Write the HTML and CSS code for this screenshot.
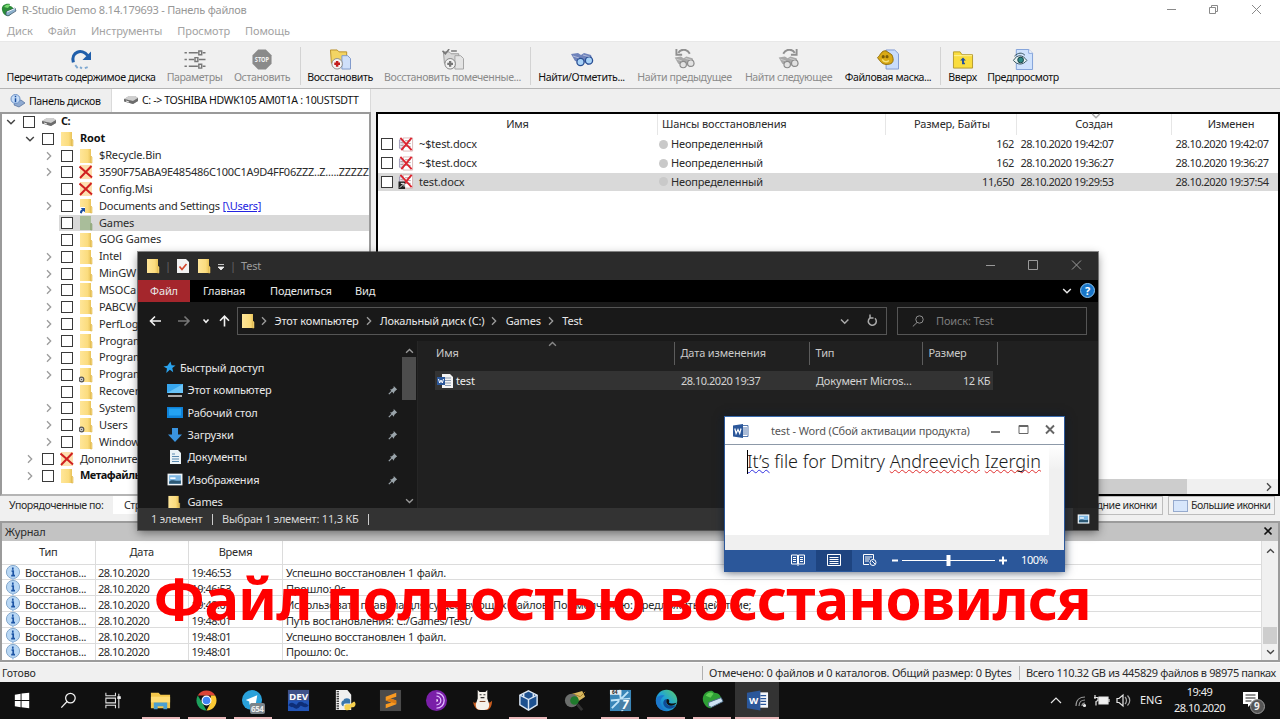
FILE: index.html
```html
<!DOCTYPE html>
<html lang="ru">
<head>
<meta charset="utf-8">
<title>R-Studio Demo 8.14.179693 - Панель файлов</title>
<link rel="stylesheet" href="styles.css">
</head>
<body>
<svg class="defs" width="0" height="0">
  <defs>
    <linearGradient id="g-folder" x1="0" y1="0" x2="1" y2="0"><stop offset="0" stop-color="#ffe699"/><stop offset=".7" stop-color="#fbdc7e"/><stop offset="1" stop-color="#e9c35a"/></linearGradient>
    <linearGradient id="g-edge" x1="0" y1="1" x2="1" y2="0"><stop offset="0" stop-color="#1565c0"/><stop offset=".5" stop-color="#1fa3d6"/><stop offset="1" stop-color="#5cd06a"/></linearGradient>
  </defs>
  <symbol id="folder" viewBox="0 0 14 16"><path d="M1 1h11v14H1z" fill="url(#g-folder)"/><path d="M12 8l1 1v6h-1.500v-6z" fill="#f6d77c" stroke="#dcb34a" stroke-width=".6"/></symbol>
  <symbol id="folder-green" viewBox="0 0 14 16"><path d="M1 1h11v14H1z" fill="#a9bd9a"/><path d="M12 8l1 1v6h-1.500v-6z" fill="#9db387" stroke="#8aa375" stroke-width=".6"/></symbol>
  <symbol id="folder-link" viewBox="0 0 14 16"><use href="#folder"/><path d="M0 9h6v7H0z" fill="#fff"/><path d="M1 15c0-2 .5-3 2-3.500L1.800 10H6v4.200l-1.300-1.300C3.500 13.200 3 14 3 15.500z" fill="#1c4fa0"/></symbol>
  <symbol id="folder-gear" viewBox="0 0 14 16"><use href="#folder"/><circle cx="2.500" cy="12.500" r="2.300" fill="#ddd" stroke="#555" stroke-width="1.200"/><circle cx="2.500" cy="12.500" r=".8" fill="#555"/></symbol>
  <symbol id="folder-x" viewBox="0 0 14 16"><path d="M1 1h12v14H1z" fill="#fde0b0"/><path d="M.5 2.500l12.500 11M12.500 2L1 14" stroke="#d02020" stroke-width="2"/></symbol>
  <symbol id="file-x" viewBox="0 0 16 16"><path d="M1 3h7v9H1z" fill="#e8e2ee" stroke="#8c84a8" stroke-width=".8"/><path d="M5 1h10v14H5z" fill="#fff" stroke="#c99" stroke-width=".7"/><path d="M7 4h6M7 7h6M7 10h6M2 6h3M2 9h3" stroke="#a99"/><path d="M2 1l12 13M14 1L3 14" stroke="#dc2430" stroke-width="2"/></symbol>
  <symbol id="drive" viewBox="0 0 16 10"><path d="M1 4l5-3h6l3 2v3l-5 3-9-3z" fill="#a8a8a8"/><path d="M1 4l5-3h6l3 2-5 3z" fill="#cfcfcf"/><path d="M10 6l5-3v3l-5 3zM1 4l9 2v3L1 6.500z" fill="#6c6c6c"/><path d="M3 6l3 1" stroke="#e8e8e8"/></symbol>
  <symbol id="rstudio" viewBox="0 0 16 14"><path d="M1 7C0 2 5 0 9 1l-1 2c3 0 5 2 5 5l-5 5C4 13 2 11 1 7z" fill="#2c8a3a"/><path d="M3 4c2-3 5-3 6-2L7 5z" fill="#78d870"/><path d="M5 9l9-4 1 3-8 5-2-1z" fill="#8db0cc" stroke="#3c5266" stroke-width=".7"/><path d="M6 9l8-3.500" stroke="#eef6ff"/></symbol>
  <symbol id="dn" viewBox="0 0 10 6"><path d="M1.200 1L5 4.700 8.800 1" fill="none" stroke="currentColor" stroke-width="1.500"/></symbol>
  <symbol id="rt" viewBox="0 0 6 10"><path d="M1 1.200L4.700 5 1 8.800" fill="none" stroke="currentColor" stroke-width="1.300"/></symbol>
  <symbol id="info" viewBox="0 0 16 16"><circle cx="8" cy="7" r="6.600" fill="#b9d8f5" stroke="#86a9cc"/><path d="M6 13l2 3 1.500-3z" fill="#9dc0e4"/><path d="M7.800 2.500v2.200M6.600 6.200h1.600v4.500M6.200 10.700h3.800" stroke="#1d55a5" stroke-width="1.700" fill="none"/></symbol>
  <symbol id="pin" viewBox="0 0 10 10"><path d="M5.500.8l3.700 3.700-1 .4-2 2-.3 1.900L2 4.500l1.900-.3 2-2z" fill="#9aa4aa"/><path d="M3.800 6.200L.8 9.200" stroke="#9aa4aa" stroke-width="1.200"/></symbol>
  <symbol id="pic" viewBox="0 0 15 12"><path d="M.5.5h14v11H.5z" fill="#eef4f8"/><path d="M2 2h11v8H2z" fill="#7eb8e4"/><path d="M2 8c3-3 5 0 11-1v3H2z" fill="#2c5874"/><path d="M3 4h5v1.500H3z" fill="#fff"/></symbol>
  <symbol id="binoc" viewBox="0 0 24 16"><path d="M1 3l7-1 3 2 3-2 7 2 2 6-5 4-4-3-2-3-3 3-4-1z" fill="currentColor"/><circle cx="10.500" cy="11" r="3.600" fill="var(--lens)" stroke="var(--rim)" stroke-width="1.300"/><circle cx="19" cy="9.500" r="3.600" fill="var(--lens)" stroke="var(--rim)" stroke-width="1.300"/><path d="M3 5l6 2M13 4l7 2" stroke="#fff" stroke-opacity=".45"/></symbol>
</svg>

<div class="app">
  <header class="titlebar">
    <svg class="i-app"><use href="#rstudio"/></svg>
    <span class="title">R-Studio Demo 8.14.179693 - Панель файлов</span>
    <svg class="winctl" viewBox="0 0 110 20" fill="none" stroke="#8a8a8a"><path d="M7 9.500h9M49.500 7.500h6v6h-6zM51.500 7.500v-2h6v6h-2M92 5l9 9M101 5l-9 9"/></svg>
  </header>
  <nav class="menubar"><span>Диск</span><span>Файл</span><span>Инструменты</span><span>Просмотр</span><span>Помощь</span></nav>

  <div class="toolbar">
    <div class="tool t1"><svg viewBox="0 0 24 22"><path d="M4 14C1 3 13-1 19 7" fill="none" stroke="#1f5eaa" stroke-width="3.200"/><path d="M22.500 2.500v9h-9z" fill="#1f5eaa"/><path d="M6 17l2.500 3M11 19l2 1.500M16 20l3-1" stroke="#7fa8d0" stroke-width="2"/></svg><span>Перечитать содержимое диска</span></div>
    <div class="tool t2 off"><svg viewBox="0 0 24 22" stroke="#777" stroke-width="1.500" fill="none"><path d="M1 4h2.500M5.500 4H15M20 4h3M1 11h2.500M5.500 11H11M16 11h7M1 18h2.500M5.500 18H15M20 18h3"/><path d="M16 2h3v4h-3zM12 9h3v4h-3zM16 16h3v4h-3z"/></svg><span>Параметры</span></div>
    <div class="tool t3 off"><svg viewBox="0 0 24 22"><path d="M8 .500h8l6 6v9l-6 6H8l-6-6v-9z" fill="#8a8a8a"/><text x="12" y="14" text-anchor="middle" font-size="7" font-weight="bold" textLength="15" lengthAdjust="spacingAndGlyphs" fill="#f2f2f2">STOP</text></svg><span>Остановить</span></div>
    <i class="vsep"></i>
    <div class="tool t4"><svg viewBox="0 0 24 22"><path d="M2 1h7l2 2h8v12H3z" fill="#f3d463" stroke="#b9902a"/><path d="M14 7h6l3 3v11h-9z" fill="#cfe0fa" stroke="#7d97c9"/><circle cx="9" cy="15.500" r="5.500" fill="#f6f6f6" stroke="#8a8a8a"/><path d="M9 12.500v6M6 15.500h6" stroke="#c41e1e" stroke-width="2.600"/></svg><span>Восстановить</span></div>
    <div class="tool t5 off"><svg viewBox="0 0 24 22"><path d="M2 3h6l2 2h8v10H3z" fill="#d8d8d8" stroke="#999"/><path d="M14 7h6l3 3v11h-9z" fill="#e4e4e4" stroke="#a2a2a2"/><circle cx="9" cy="15.500" r="5.500" fill="#f2f2f2" stroke="#808080"/><path d="M9 12.500v6M6 15.500h6" stroke="#777" stroke-width="2.400"/><path d="M1 2l3 3 4-5M10 2h6" fill="none" stroke="#777" stroke-width="1.600"/></svg><span>Восстановить помеченные...</span></div>
    <i class="vsep"></i>
    <div class="tool t6 blue"><svg><use href="#binoc" y="2" height="16" width="24"/></svg><span>Найти/Отметить...</span></div>
    <div class="tool t7 off grey"><svg viewBox="0 0 24 22"><use href="#binoc" y="6" height="15" width="23"/><path d="M17 5C14-1 7 0 5 4M3 0v6h6" fill="none" stroke="#909090" stroke-width="2"/></svg><span>Найти предыдущее</span></div>
    <div class="tool t8 off grey"><svg viewBox="0 0 24 22"><use href="#binoc" y="6" height="15" width="23"/><path d="M6 5C9-1 16 0 18 4M20 0v6h-6" fill="none" stroke="#909090" stroke-width="2"/></svg><span>Найти следующее</span></div>
    <div class="tool t9"><svg viewBox="0 0 24 22"><path d="M10 1h9l4 4v16H10z" fill="#c9dcfb" stroke="#8099d0"/><path d="M1 9c3-2 4-8 9-7l6 4c3 6 1 10-4 10-6 1-8-3-11-7z" fill="#d9a916" stroke="#8f6b07"/><circle cx="7" cy="8" r="1.600" fill="#7a5c08"/><circle cx="11" cy="8" r="1.600" fill="#7a5c08"/><path d="M6 11c2 3 5 3 7 1" fill="none" stroke="#f6e27a" stroke-width="1.500"/></svg><span>Файловая маска...</span></div>
    <i class="vsep"></i>
    <div class="tool t10"><svg viewBox="0 0 24 22"><path d="M2 3h7l2 3h11v14H2z" fill="#fadd3e" stroke="#b59a2e"/><path d="M2.500 7h19" stroke="#fff3a0"/><path d="M12 9l-3 3h2v4h3v-1.500h-1V12h2z" fill="#224f9e"/></svg><span>Вверх</span></div>
    <div class="tool t11"><svg viewBox="0 0 24 22"><path d="M5 .500h13l4 4v17H5z" fill="#cfe2fd" stroke="#7fa0d8"/><path d="M18 .500v4h4" fill="#fff" stroke="#7fa0d8"/><path d="M2 12c4-7 10-6 14 0-4 5-10 5-14 0z" fill="#e8f4f4" stroke="#33505a"/><circle cx="9.500" cy="11.500" r="3" fill="#2d8a86" stroke="#173e46"/><path d="M3 7.500c4-4 8-4 11-1" stroke="#33505a" fill="none"/></svg><span>Предпросмотр</span></div>
  </div>

  <div class="tabs">
    <div class="tab"><svg viewBox="0 0 16 14"><path d="M5 8l6-2 4 3-6 4-5-2z" fill="#8faad0" stroke="#4c6a9a" stroke-width=".7"/><circle cx="5.500" cy="5" r="4.500" fill="#c5dcf7" stroke="#6a8fc4"/><path d="M5.500 1.800v1.400M5.500 4.200v4" stroke="#1d4fa0" stroke-width="1.500"/></svg><span>Панель дисков</span></div>
    <div class="tab active"><svg viewBox="0 0 16 10"><use href="#drive"/></svg><span>C: -&gt; TOSHIBA HDWK105 AM0T1A : 10USTSDTT</span></div>
  </div>

  <main class="panes">
    <section class="tree">
      <div class="row l0"><svg class="dn"><use href="#dn"/></svg><i class="cb"></i><svg class="ic drv"><use href="#drive"/></svg><b class="tight">C:</b></div>
      <div class="row l1"><svg class="dn"><use href="#dn"/></svg><i class="cb"></i><svg class="ic"><use href="#folder"/></svg><b>Root</b></div>
      <div class="row l2"><svg class="rt"><use href="#rt"/></svg><i class="cb"></i><svg class="ic"><use href="#folder"/></svg><span>$Recycle.Bin</span></div>
      <div class="row l2"><svg class="rt"><use href="#rt"/></svg><i class="cb"></i><svg class="ic"><use href="#folder-x"/></svg><span class="hash">3590F75ABA9E485486C100C1A9D4FF06ZZZ..Z.....ZZZZZ</span></div>
      <div class="row l2"><svg class="rt"></svg><i class="cb"></i><svg class="ic"><use href="#folder-x"/></svg><span>Config.Msi</span></div>
      <div class="row l2"><svg class="rt"><use href="#rt"/></svg><i class="cb"></i><svg class="ic"><use href="#folder-link"/></svg><span class="linked">Documents and Settings <a>[\Users]</a></span></div>
      <div class="row l2 sel"><svg class="rt"></svg><i class="cb"></i><svg class="ic"><use href="#folder-green"/></svg><span>Games</span></div>
      <div class="row l2"><svg class="rt"></svg><i class="cb"></i><svg class="ic"><use href="#folder"/></svg><span>GOG Games</span></div>
      <div class="row l2"><svg class="rt"><use href="#rt"/></svg><i class="cb"></i><svg class="ic"><use href="#folder"/></svg><span>Intel</span></div>
      <div class="row l2"><svg class="rt"><use href="#rt"/></svg><i class="cb"></i><svg class="ic"><use href="#folder"/></svg><span>MinGW</span></div>
      <div class="row l2"><svg class="rt"><use href="#rt"/></svg><i class="cb"></i><svg class="ic"><use href="#folder"/></svg><span>MSOCa</span></div>
      <div class="row l2"><svg class="rt"><use href="#rt"/></svg><i class="cb"></i><svg class="ic"><use href="#folder"/></svg><span>PABCW</span></div>
      <div class="row l2"><svg class="rt"><use href="#rt"/></svg><i class="cb"></i><svg class="ic"><use href="#folder"/></svg><span>PerfLog</span></div>
      <div class="row l2"><svg class="rt"><use href="#rt"/></svg><i class="cb"></i><svg class="ic"><use href="#folder"/></svg><span>Program</span></div>
      <div class="row l2"><svg class="rt"><use href="#rt"/></svg><i class="cb"></i><svg class="ic"><use href="#folder"/></svg><span>Program</span></div>
      <div class="row l2"><svg class="rt"><use href="#rt"/></svg><i class="cb"></i><svg class="ic"><use href="#folder-gear"/></svg><span>Program</span></div>
      <div class="row l2"><svg class="rt"></svg><i class="cb"></i><svg class="ic"><use href="#folder"/></svg><span>Recover</span></div>
      <div class="row l2"><svg class="rt"><use href="#rt"/></svg><i class="cb"></i><svg class="ic"><use href="#folder"/></svg><span>System</span></div>
      <div class="row l2"><svg class="rt"><use href="#rt"/></svg><i class="cb"></i><svg class="ic"><use href="#folder-gear"/></svg><span>Users</span></div>
      <div class="row l2"><svg class="rt"><use href="#rt"/></svg><i class="cb"></i><svg class="ic"><use href="#folder"/></svg><span>Window</span></div>
      <div class="row l1"><svg class="rt"><use href="#rt"/></svg><i class="cb"></i><svg class="ic"><use href="#folder-x"/></svg><span>Дополните</span></div>
      <div class="row l1"><svg class="rt"><use href="#rt"/></svg><i class="cb"></i><svg class="ic"><use href="#folder"/></svg><b class="tight">Метафайлы</b></div>
    </section>

    <section class="files">
      <div class="frow fhead"><span class="c-mid">Имя</span><span>Шансы восстановления</span><span class="c-size">Размер, Байты</span><span class="c-mid sorted">Создан<svg class="sort"><use href="#dn"/></svg></span><span class="c-mid last">Изменен</span></div>
      <div class="frow"><span class="fname"><i class="cb"></i><svg class="fx"><use href="#file-x"/></svg>~$test.docx</span><span><i class="dot"></i>Неопределенный</span><span class="num">162</span><span class="date">28.10.2020 19:42:07</span><span class="date">28.10.2020 19:42:07</span></div>
      <div class="frow"><span class="fname"><i class="cb"></i><svg class="fx"><use href="#file-x"/></svg>~$test.docx</span><span><i class="dot"></i>Неопределенный</span><span class="num">162</span><span class="date">28.10.2020 19:36:27</span><span class="date">28.10.2020 19:36:27</span></div>
      <div class="frow sel"><span class="fname"><i class="cb"></i><svg class="fx" viewBox="0 0 16 16"><use href="#file-x"/><path d="M0 8h7v8H0z" fill="#222"/><path d="M1.500 14.500l4-4M2.500 10h3.500v3.500" stroke="#fff" fill="none"/></svg>test.docx</span><span><i class="dot"></i>Неопределенный</span><span class="num">11,650</span><span class="date">28.10.2020 19:29:53</span><span class="date">28.10.2020 19:37:54</span></div>
      <div class="fscroll"><i></i><svg class="rt"><use href="#rt"/></svg></div>
    </section>
  </main>

  <div class="sortbar">
    <span class="lbl">Упорядоченные по:</span><span class="combo">Стр</span>
    <span class="btn b1">Средние иконки</span><span class="btn b2"><i class="bigic"></i>Большие иконки</span>
  </div>

  <section class="log">
    <div class="log-title"><span>Журнал</span><svg viewBox="0 0 10 10"><path d="M1.500 1.500l7 7M8.500 1.500l-7 7" stroke="#111" stroke-width="1.700"/></svg></div>
    <div class="log-body">
      <div class="log-table">
        <div class="lrow lhead"><span>Тип</span><span>Дата</span><span>Время</span><span></span></div>
        <div class="lrow"><span><svg><use href="#info"/></svg>Восстанов...</span><span class="date">28.10.2020</span><span class="date">19:46:53</span><span>Успешно восстановлен 1 файл.</span></div>
        <div class="lrow"><span><svg><use href="#info"/></svg>Восстанов...</span><span class="date">28.10.2020</span><span class="date">19:46:53</span><span>Прошло: 0с.</span></div>
        <div class="lrow"><span><svg><use href="#info"/></svg>Восстанов...</span><span class="date">28.10.2020</span><span class="date">19:48:01</span><span>Использовать правила для существующих файлов: По умолчанию: предложить действие;</span></div>
        <div class="lrow"><span><svg><use href="#info"/></svg>Восстанов...</span><span class="date">28.10.2020</span><span class="date">19:48:01</span><span>Путь востановления: C:/Games/Test/</span></div>
        <div class="lrow"><span><svg><use href="#info"/></svg>Восстанов...</span><span class="date">28.10.2020</span><span class="date">19:48:01</span><span>Успешно восстановлен 1 файл.</span></div>
        <div class="lrow"><span><svg><use href="#info"/></svg>Восстанов...</span><span class="date">28.10.2020</span><span class="date">19:48:01</span><span>Прошло: 0с.</span></div>
      </div>
      <div class="vscroll"><svg class="up"><use href="#dn"/></svg><i></i><svg class="down"><use href="#dn"/></svg></div>
    </div>
  </section>

  <footer class="status"><span class="s1">Готово</span><span class="s2">Отмечено: 0 файлов и 0 каталогов. Общий размер: 0 Bytes</span><span class="s3">Всего 110.32 GB из 445829 файлов в 98975 папках</span></footer>

  <div class="taskbar">
    <div class="tk"><svg viewBox="0 0 24 24" fill="#fff"><path d="M4 6l6-1v6.500H4zM11 4.800L19 4v7.500h-8zM4 12.500h6V19l-6-1zM11 12.500h8V20l-8-.900z"/></svg></div>
    <div class="tk"><svg viewBox="0 0 24 24" fill="none" stroke="#f2f2f2" stroke-width="1.300"><circle cx="14" cy="9.500" r="5"/><path d="M10.500 13L4.500 19.500"/></svg></div>
    <div class="tk"><svg viewBox="0 0 24 24" fill="none" stroke="#e6e6e6" stroke-width="1.100"><path d="M3 4v3h10V4M3 20v-3h10v3M3 9.500h10v5H3zM16.500 5v15"/><path d="M15.500 8h2.500v2h-2.500z" fill="#fff"/></svg></div>
    <div class="tk run"><svg viewBox="0 0 24 24"><path d="M2 4h8l2 2h10v14H2z" fill="#f3c64a"/><path d="M2 8h20v6H2z" fill="#ffdc74"/><path d="M5 21v-7h14v7h-4v-3H9v3z" fill="#4a9fd0"/></svg></div>
    <div class="tk run"><svg viewBox="0 0 24 24"><path d="M2.900 6.800A10.500 10.500 0 0 1 21.100 6.800H12z" fill="#db4437"/><path d="M2.900 6.800L8 15l4 7.500A10.500 10.500 0 0 1 2.900 6.800z" fill="#1da05c"/><path d="M21.100 6.800A10.500 10.500 0 0 1 12 22.500L16.500 14l0-7.200z" fill="#fbc934"/><circle cx="12" cy="12" r="5.200" fill="#fff"/><circle cx="12" cy="12" r="4" fill="#4285f4"/></svg></div>
    <div class="tk run"><svg viewBox="0 0 24 24"><circle cx="11.500" cy="11.500" r="10.500" fill="#2aa1da"/><path d="M5 11.500l12-5-2 11-4-3-2 2-.5-3.500z" fill="#fff"/></svg><em>654</em></div>
    <div class="tk"><svg viewBox="0 0 24 24"><path d="M1 1h22v22H1z" fill="#2255b8"/><path d="M1 1h22v11H1z" fill="#40528a"/><text x="12" y="11" text-anchor="middle" font-size="10" font-weight="bold" textLength="20" lengthAdjust="spacingAndGlyphs" fill="#fff">DEV</text><path d="M3 18c3-5 6 4 9-1s6 3 9-1" stroke="#0e2e78" stroke-width="4" fill="none"/></svg></div>
    <div class="tk"><svg viewBox="0 0 24 24"><path d="M3 1h12l4 5v16H3z" fill="#f0f0f0"/><path d="M5 2v20" stroke="#444" stroke-width="2.500" stroke-dasharray="1.500 1"/><path d="M11 12c0-3 7-3 7 0v3h-5c-2 0-2 2-2 3-3 0-3-6 0-6z" fill="#3a76ab"/><path d="M22 13c3 2 1 6-1 6h-2c0 4-7 4-7 1v-3c2-2 6 0 7-2z" fill="#f5d04e"/></svg></div>
    <div class="tk"><svg viewBox="0 0 24 24"><path d="M1 1h22v22H1z" fill="#4b4b4b"/><path d="M18 4v4l-6 2 6 2v4L7 20v-4l6-2-6-2V8z" fill="#f89a22"/><path d="M7 12l11 3.500V12l-6-2z" fill="#d87a14"/></svg></div>
    <div class="tk"><svg viewBox="0 0 24 24"><circle cx="12" cy="12" r="11" fill="#7a1fa8"/><g fill="none" stroke="#e0b8ff" stroke-width="1.400"><path d="M12 4a8 8 0 0 1 0 16M12 7.500a4.500 4.500 0 0 1 0 9"/></g><path d="M12 10.500a1.500 1.500 0 0 1 0 3z" fill="#fff"/></svg></div>
    <div class="tk"><svg viewBox="0 0 24 24"><path d="M2 13c1 2 3 1 3 1h14s2 0 3-2c0 7-3 10-6 10H8c-3-1-5-4-6-9z" fill="#c75b1e"/><path d="M7 1l2 2h6l2-2v9l2 6c0 5-2 6-7 6s-7-1-7-6l2-6z" fill="#f4f1ea"/><path d="M9 6h2M13 6h2M10 9h4" stroke="#333" stroke-width="1.300"/><path d="M9 13h6" stroke="#7b3a1a"/></svg></div>
    <div class="tk run"><svg viewBox="0 0 24 24" stroke="#d9e6f4" stroke-width="1.500"><path d="M12 2l9 4.500v10L12 22l-9-5.500v-10z" fill="#1d5190"/><path d="M3 6.500l9 4.500 9-4.500M12 11v11M7 5v4M17 5v4" fill="none"/></svg></div>
    <div class="tk"><svg viewBox="0 0 24 24"><path d="M10 5l10-3 3 6-9 6z" fill="#d8b860"/><path d="M10 5l8 3 5-5" stroke="#a17c28" fill="none"/><circle cx="9" cy="12" r="7" fill="#6b6e6c"/><circle cx="12" cy="12" r="4.500" fill="#1f7a2c"/><path d="M15 16l5 6" stroke="#333" stroke-width="3"/></svg></div>
    <div class="tk run"><svg viewBox="0 0 24 24"><path d="M1 1h22v22H1z" fill="#3a86b8"/><path d="M3 20L20 3M2 12l20-2M11 1l3 22" stroke="#bfe4f8" stroke-width="2"/><path d="M1 1h12v5H1z" fill="#e6eef2"/><path d="M11 11h11v11H11z" fill="#4a7fa6"/><text x="17" y="21" text-anchor="middle" font-size="12" font-weight="bold" font-style="italic" fill="#fff">7</text><text x="6" y="5.500" text-anchor="middle" font-size="5" font-weight="bold" fill="#222">64</text></svg></div>
    <div class="tk run"><svg viewBox="0 0 24 24"><circle cx="12" cy="12" r="11.200" fill="url(#g-edge)"/><path d="M1 12c1-5 6-6 9-5-4 2-5 6-4 9 1 4 4 6 7 7C5 23 1 18 1 12z" fill="#1d78cc"/><path d="M12.500 11.500c-1.500 2-1 5 2.500 6 3 .8 6-.2 7-1-3 6-11 5-13 0-1-3 .5-6 3.500-6z" fill="#0f4c96"/><path d="M12.800 10.500c2 0 2.700 2 1.700 3.500 1 1.500 5.500 1.500 8 0-2 4-7 4-9 2.500-2-1.500-2.300-4-.7-6z" fill="#101010"/></svg></div>
    <div class="tk run"><svg viewBox="0 0 24 24"><path d="M2 12C1 5 7 1 12 2l2 2c4 0 7 3 7 6L10 20C6 20 3 16 2 12z" fill="#2e9f35"/><path d="M8 14l13-5 2 4-12 6-3-1z" fill="#cfe3f4" stroke="#4d6d88"/><path d="M5 7c2-4 6-4 8-2l-3 4z" fill="#5fcf55"/></svg></div>
    <div class="tk run cur"><svg viewBox="0 0 24 24"><path d="M13 3.500h10v16H13z" fill="#f4f6fa"/><path d="M15 7h6M15 10h6M15 13h6M15 16h6" stroke="#2b579a" stroke-width="1.300"/><path d="M1 4l14-2.500v21L1 20z" fill="#2b579a"/><text x="8" y="15.500" text-anchor="middle" font-size="10" font-weight="bold" fill="#fff">W</text></svg></div>
    <div class="tray">
      <svg class="tricons" viewBox="0 0 86 24" fill="none" stroke="#e6e6e6" stroke-width="1.200"><path d="M1 15l5-5 5 5"/><path d="M26 18c0-6 4-9 9-9M29 18c0-4 3-6 6-6M32 18c0-2 1-3 3-3" stroke="#999"/><circle cx="34.500" cy="17.500" r="1" fill="#ddd"/><path d="M49 9h9v7h-9z" fill="#f2f2f2"/><path d="M59 11v3M45 7v4M44 9.500h4v3l-2 1v4"/><path d="M67 10.500h2l4-3.500v11l-4-3.500h-2z"/><path d="M75 9c2 2 2 5 0 7M77.500 7.500c3 3 3 7 0 10" stroke="#aaa"/></svg>
      <span class="lang">ENG</span>
      <span class="clock"><b>19:49</b><b>28.10.2020</b></span>
      <span class="notif"><svg viewBox="0 0 24 26"><path d="M1 3h15v12H9l-3 3v-3H1z" fill="#fff"/><path d="M3.500 6h10M3.500 9h10M3.500 12h6" stroke="#222"/><circle cx="15.500" cy="17.500" r="7" fill="#555" stroke="#999"/></svg><em>9</em></span>
    </div>
  </div>
</div>

<div class="explorer">
  <div class="ex-title">
    <svg class="ef"><use href="#folder"/></svg><i>|</i>
    <svg class="ef chk" viewBox="0 0 14 16"><path d="M1 1h9l3 3v11H1z" fill="#f2f2f2"/><path d="M3.500 8.500l2.500 3 4.500-5.500" stroke="#d2472c" stroke-width="1.700" fill="none"/></svg>
    <svg class="ef"><use href="#folder"/></svg>
    <svg class="qa" viewBox="0 0 8 8"><path d="M1 1.500h6M1 4h6L4 7z" fill="#eee" stroke="#eee" stroke-width=".8"/></svg><i>|</i>
    <span>Test</span>
    <svg class="exctl" viewBox="0 0 110 20" fill="none" stroke="#9a9a9a"><path d="M4 9.500h9M46.500 4.500h9v9h-9zM90 4.500l9 9M99 4.500l-9 9"/></svg>
  </div>
  <div class="ribbon"><span class="file">Файл</span><span class="r1">Главная</span><span class="r2">Поделиться</span><span class="r3">Вид</span><svg class="rdn"><use href="#dn"/></svg><em class="help">?</em></div>
  <div class="addr">
    <svg class="navs" viewBox="0 0 90 20" fill="none" stroke="#f2f2f2" stroke-width="1.600"><path d="M22 10H12M16 5.500L11.500 10l4.500 4.500"/><path d="M39 10h11M45.500 5.500L50 10l-4.500 4.500" stroke="#777"/><path d="M64.500 8.500l2.500 2.700 2.500-2.700"/><path d="M85.500 15.500v-10M81 9.700l4.500-4.500L90 9.700"/></svg>
    <div class="path"><svg class="ef"><use href="#folder"/></svg><svg class="rt"><use href="#rt"/></svg><span class="p1">Этот компьютер</span><svg class="rt"><use href="#rt"/></svg><span class="p2">Локальный диск (C:)</span><svg class="rt"><use href="#rt"/></svg><span class="p3">Games</span><svg class="rt"><use href="#rt"/></svg><span>Test</span>
      <svg class="pend" viewBox="0 0 42 20" fill="none" stroke="#aaa" stroke-width="1.500"><path d="M2 8.500l3.700 3.700 3.700-3.700"/><path d="M36 7.300a4 4 0 1 1-4-.8M31 3.500v3.500h3.500"/></svg></div>
    <div class="search"><svg viewBox="0 0 12 12" fill="none" stroke="#909090"><circle cx="7.500" cy="4.500" r="3.700"/><path d="M5 7.500L.8 11.500"/></svg><span>Поиск: Test</span></div>
  </div>
  <div class="ex-main">
    <div class="navpane">
      <div class="quick"><svg viewBox="0 0 14 14"><path d="M8 .500l1.200 4 4.300.300L10 7.500l1 4.500-3.600-2.500L3.500 13l.8-4.800L.5 6l4.300-1z" fill="#2aa3ee"/></svg>Быстрый доступ</div>
      <div class="nv"><svg class="ni" viewBox="0 0 16 14"><path d="M0 1h16v9H0z" fill="#37a6ee"/><path d="M0 10h16L16 1z" fill="#69c4f8"/><path d="M1 13h14" stroke="#ddd" stroke-width="1.500"/></svg><span class="n1">Этот компьютер</span><svg class="pin"><use href="#pin"/></svg></div>
      <div class="nv"><svg class="ni" viewBox="0 0 16 14"><path d="M0 1h16v11H0z" fill="#0f82d8"/><path d="M2 2.500h12v7H2z" fill="#24a2f2"/></svg><span>Рабочий стол</span><svg class="pin"><use href="#pin"/></svg></div>
      <div class="nv"><svg class="ni" viewBox="0 0 16 14"><path d="M5 0h6v6.500h4L8 14 1 6.500h4z" fill="#3a94e0"/></svg><span>Загрузки</span><svg class="pin"><use href="#pin"/></svg></div>
      <div class="nv"><svg class="ni" viewBox="0 0 16 14"><path d="M3 0h8l3 3v11H3z" fill="#eaf2f6"/><path d="M5 4h3M5 6.500h7M5 9h7M5 11.500h7" stroke="#5a8ab0" stroke-width="1.200"/></svg><span>Документы</span><svg class="pin"><use href="#pin"/></svg></div>
      <div class="nv"><svg class="ni"><use href="#pic" width="16" height="13"/></svg><span class="n5">Изображения</span><svg class="pin"><use href="#pin"/></svg></div>
      <div class="nv"><svg class="ni"><use href="#folder" width="14" height="15"/></svg><span>Games</span></div>
      <div class="nscroll"><svg class="up"><use href="#dn"/></svg><i></i><svg class="down"><use href="#dn"/></svg></div>
    </div>
    <div class="flist">
      <div class="eh"><span>Имя<svg class="up"><use href="#dn"/></svg></span><span class="d">Дата изменения</span><span class="t">Тип</span><span class="s">Размер</span></div>
      <div class="er"><span><svg viewBox="0 0 16 14"><path d="M5 0h8l3 3v11H5z" fill="#f4f4f4"/><path d="M8 4h6M8 6.500h6M8 9h6M8 11.500h6" stroke="#8a9ab0"/><path d="M0 3h8v8H0z" fill="#2b579a"/><path d="M1.500 5l1.200 4L4 6l1.300 3L6.500 5" stroke="#fff" fill="none"/></svg>test</span><span class="date">28.10.2020 19:37</span><span class="ty">Документ Micros...</span><span class="sz">12 КБ</span></div>
    </div>
  </div>
  <div class="ex-status"><span class="e1">1 элемент</span><i></i><span class="e2">Выбран 1 элемент: 11,3 КБ</span><i></i><span class="viewbtn"><svg class="viewic"><use href="#pic"/></svg></span></div>
</div>

<div class="word">
  <div class="w-title">
    <svg class="wi" viewBox="0 0 16 14"><path d="M9 1.500h6v11H9z" fill="#fff" stroke="#2b579a" stroke-width=".8"/><path d="M10 4h4M10 6h4M10 8h4M10 10h4" stroke="#2b579a" stroke-width=".8"/><path d="M0 1.500L10 0v14L0 12.500z" fill="#2b579a"/><path d="M1.800 4.500l1.300 5L5 5.500l1.700 4L8 4.500" stroke="#fff" stroke-width="1.200" fill="none"/></svg>
    <span>test - Word (Сбой активации продукта)</span>
    <svg class="wctl" viewBox="0 0 76 20" fill="none" stroke="#666"><path d="M4 11h9" stroke-width="1.700"/><path d="M32 4.500h9v8h-9zM32 5.500h9" /><path d="M59 4.500l8 8M67 4.500l-8 8" stroke-width="1.900"/></svg>
  </div>
  <div class="w-doc"><div class="page"><p><u class="caret"></u><u class="sq blue">It’s</u> file for Dmitry <u class="sq">Andreevich</u> <u class="sq">Izergin</u></p></div></div>
  <div class="w-status">
    <span class="m"><svg viewBox="0 0 14 12" fill="none" stroke="#fff"><path d="M.500 1h6v9h-6zM7.500 1h6v9h-6zM7 1v11M2 3.500h3M2 5.500h3M2 7.500h3M9 3.500h3M9 5.500h3M9 7.500h3"/></svg></span>
    <span class="m on"><svg viewBox="0 0 14 12" fill="none" stroke="#fff"><path d="M.500.500h13v11H.500zM2.500 3.500h9M2.500 5.500h9M2.500 7.500h9M2.500 9.500h9"/></svg></span>
    <span class="m"><svg viewBox="0 0 14 12" fill="none" stroke="#fff"><path d="M6 10.500H.500v-10h10V5M2 3h7M2 5h5M2 7h4"/><circle cx="10" cy="8.500" r="3"/><path d="M9 7l3 3"/></svg></span>
    <svg class="zoom" viewBox="0 0 118 12" stroke="#fff" fill="none"><path d="M1 6.500h6M108 6.500h8M112 2.500v8" stroke-width="2"/><path d="M11 6.500h93"/><path d="M57.500 1v11" stroke-width="4"/></svg>
    <span class="pct">100%</span>
  </div>
</div>

<div class="caption"><span class="k1">Файл</span> <span class="k2">полностью</span> <span class="k3">восстановился</span></div>
</body>
</html>
```

FILE: styles.css
```css
* { box-sizing: border-box; }
html, body { margin: 0; height: 719px; overflow: hidden; }
body { position: relative; width: 1280px; font: 11px/16px "Noto Sans", "Open Sans", sans-serif; color: #2b2b2b; background: #f0f0f0; letter-spacing: -0.15px; }
svg { display: block; flex: none; }
i, em, u { font-style: normal; text-decoration: none; }
.defs { position: absolute; }
.date { letter-spacing: -0.5px; }
.app { display: flex; flex-direction: column; height: 719px; }

.titlebar { height: 20px; flex: none; background: #fff; display: flex; align-items: center; padding-left: 1px; color: #979797; }
.i-app { width: 16px; height: 14px; margin-right: 5px; }
.title { letter-spacing: -0.25px; }
.winctl { width: 110px; height: 20px; margin-left: auto; margin-right: 10px; }
.menubar { height: 21px; flex: none; background: #fff; display: flex; align-items: center; gap: 15px; padding-left: 7px; color: #a3a3a3; font-size: 11px; letter-spacing: -0.08px; }

.toolbar { height: 48px; flex: none; display: flex; border-bottom: 1px solid #b4b4b4; padding-top: 7px; font-size: 10.6px; color: #111; border-top: 1px solid #e8e8e8; letter-spacing: -0.4px; }
.tool { display: flex; flex-direction: column; align-items: center; white-space: nowrap; line-height: 15px; flex: none; --lens: #a9d3f8; --rim: #2a4f93; }
.tool svg { width: 24px; height: 21px; letter-spacing: 0; }
.tool.off { color: #8b8b8b; }
.tool.blue { color: #111; }
.tool.blue svg { color: #6f83bb; }
.tool.grey { --lens: #e2e2e2; --rim: #8a8a8a; }
.tool.grey svg { color: #a9a9a9; }
.t1 { width: 162px; } .t2 { width: 65px; } .t3 { width: 70px; }
.t4 { width: 76px; } .t5 { width: 149px; } .t6 { width: 99px; } .t7 { width: 107px; } .t8 { width: 101px; } .t9 { width: 98px; }
.t10 { width: 41px; } .t11 { width: 80px; }
.vsep { width: 1px; height: 38px; background: #d3d3d3; margin: -2px 1px 0 3px; flex: none; }

.tabs { height: 23px; flex: none; display: flex; padding-left: 2px; background: #efefef; }
.tab { width: 110px; display: flex; align-items: center; gap: 3px; padding-left: 8px; border-right: 1px solid #dadada; color: #111; white-space: nowrap; font-size: 10.6px; letter-spacing: -0.4px; }
.tab svg { width: 16px; height: 14px; }
.tab.active { width: 259px; background: #fff; padding-left: 11px; letter-spacing: -0.37px; padding-bottom: 1px; }

.panes { height: 384px; flex: none; display: flex; gap: 5px; }
.tree { width: 371px; border: 2px solid #9a9a9a; border-bottom-color: #b5b5b5; background: #fff; overflow: hidden; }
.tree .row:first-child { margin-top: -0.6px; }
.row { height: 16.86px; display: flex; align-items: center; white-space: nowrap; position: relative; }
.row span, .row b { padding-bottom: 1px; }
.row .dn { width: 10px; height: 6px; margin: 0 7px 0 4px; color: #444; }
.rt { width: 6px; height: 10px; color: #9c9c9c; }
.row .rt { margin: 0 9px 0 6px; }
.cb { width: 12px; height: 12px; border: 1px solid #3a3a3a; background: #fff; flex: none; display: block; }
.row .ic { width: 14px; height: 16px; margin: 0 6px 0 6px; }
.row .ic.drv { width: 16px; height: 10px; margin: 0 4px 0 6px; }
.row.l1 { padding-left: 19px; } .row.l2 { padding-left: 38px; }
.row.sel { background: linear-gradient(#d9d9d9, #d9d9d9) 57px 0 no-repeat; }
.row a { color: #2323e0; text-decoration: underline; }
.row b { color: #111; }
.tight { letter-spacing: -0.5px; }
.hash { letter-spacing: -0.27px; }
.linked { letter-spacing: -0.26px; }

.files { flex: 1; border: 2px solid #000; background: #fff; display: flex; flex-direction: column; }
.frow { display: grid; grid-template-columns: 280px 228px 131px 155px 106px; height: 18.8px; align-items: center; flex: none; white-space: nowrap; }
.frow > span { display: flex; align-items: center; padding-left: 4px; }
.fhead { height: 21px; }
.fhead > span { height: 21px; border-right: 1px solid #e6e6e6; position: relative; padding-bottom: 1px; }
.frow > .c-mid { justify-content: center; padding-left: 0; }
.frow > .c-size { justify-content: center; padding-left: 2px; }
.frow > .last { border-right: 0; padding-left: 12px; }
.sort { position: absolute; top: -1px; left: 74px; width: 10px; height: 6px; color: #aaa; }
.frow > .fname { padding-left: 3px; }
.fx { width: 16px; height: 15px; margin: 0 5px 0 5px; }
.dot { width: 9px; height: 9px; border-radius: 5px; background: #c9c9c9; margin: 0 3px 0 -3px; }
.frow > .num { justify-content: flex-end; padding-right: 3px; letter-spacing: -0.4px; }
.frow > .date { padding-left: 3.400px; }
.frow.sel { background: #d9d9d9; }
.fscroll { margin-top: auto; height: 15px; background: #f0f0f0; display: flex; align-items: center; }
.fscroll i { width: 809px; height: 15px; background: #cdcdcd; margin-right: auto; }
.fscroll .rt { color: #444; margin-right: 6px; }

.sortbar { height: 25px; flex: none; display: flex; align-items: flex-start; font-size: 10.6px; white-space: nowrap; letter-spacing: -0.42px; line-height: 17px; }
.lbl { width: 104px; margin-left: 9px; padding-top: 1px; }
.combo { width: 120px; height: 18px; background: #fff; padding: 1px 11px; }
.btn { height: 19px; border: 1px solid #bdbdbd; background: #f2f2f2; display: flex; align-items: center; }
.b1 { margin-left: auto; width: 110px; justify-content: flex-end; padding-right: 5px; }
.b2 { margin: 0 5px 0 5px; width: 107px; padding-left: 4px; letter-spacing: -0.5px; }
.bigic { width: 15px; height: 12px; background: #d7e6fb; border: 1px solid #96aacd; margin-right: 3px; }

.log { height: 141px; flex: none; border: 2px solid #9b9b9b; display: flex; flex-direction: column; background: #fff; }
.log-title { height: 18px; flex: none; background: #c3c3c3; display: flex; justify-content: space-between; align-items: center; padding: 0 5px 0 3px; }
.log-title svg { width: 10px; height: 10px; margin-bottom: 2px; }
.log-body { flex: 1; display: flex; overflow: hidden; }
.log-table { flex: 1; }
.lrow { display: grid; grid-template-columns: 93.500px 93.500px 94px 1fr; height: 15.9px; border-bottom: 1px solid #dcdcdc; white-space: nowrap; letter-spacing: -0.22px; }
.lrow > span { border-right: 1px solid #dcdcdc; padding-left: 2px; display: flex; align-items: center; line-height: 15px; }
.lrow > .date { letter-spacing: -0.5px; padding-left: 2.500px; }
.lrow > span + span + span { padding-left: 3px; }
.lrow:last-child { border-bottom: 0; }
.lrow svg { width: 16px; height: 16px; margin: 0 4px 0 1px; }
.lhead { height: 23.5px; }
.lrow.lhead > span { justify-content: center; padding: 0 0 2px; }
.vscroll { width: 16px; background: #f0f0f0; display: flex; flex-direction: column; align-items: center; padding: 7px 0 5px; color: #444; }
.vscroll .up, .vscroll .down { width: 9px; height: 6px; }
.up { transform: scaleY(-1); }
.vscroll i { width: 14px; height: 17px; background: #cdcdcd; margin: 73px 0 auto; }

.status { height: 20px; flex: none; display: flex; align-items: center; border-top: 1px solid #fafafa; white-space: nowrap; }
.s1 { flex: 1; padding-left: 2px; font-size: 10.6px; }
.s2 { width: 317px; border-left: 1px solid #b0b0b0; padding-left: 6px; line-height: 14px; letter-spacing: -0.2px; }
.s3 { width: 261px; border-left: 1px solid #b0b0b0; padding-left: 6px; line-height: 14px; letter-spacing: -0.36px; }

.taskbar { height: 38px; flex: none; background: #101010; display: flex; color: #eee; }
.tk { width: 45.95px; height: 37px; flex: none; display: flex; align-items: center; justify-content: center; position: relative; padding-bottom: 1px; }
.tk svg { width: 23px; height: 23px; letter-spacing: 0; }
.run::after { content: ""; position: absolute; left: 4px; right: 4px; bottom: 0; height: 2px; background: #e7b6b8; }
.tk.cur { background: #333; width: 44px; }
.tk.cur::after { left: 0; right: 0; }
.tk em { position: absolute; left: 20px; top: 21px; width: 15px; height: 11px; background: #7c848a; border-radius: 2px; font: bold 8px/11px "Noto Sans", sans-serif; text-align: center; letter-spacing: -0.5px; color: #eee; }
.tray { margin-left: auto; display: flex; align-items: center; }
.tricons { width: 86px; height: 24px; margin-top: -3px; }
.lang { margin: -3px 0 0 4px; width: 29px; }
.clock { width: 61px; display: flex; flex-direction: column; align-items: center; line-height: 16px; letter-spacing: -0.5px; margin-top: -2px; }
.clock b { font-weight: normal; }
.notif { position: relative; margin: 1px 14px 0 12px; width: 24px; }
.notif svg { width: 24px; height: 26px; }
.notif em { position: absolute; left: 12px; top: 11px; font-weight: bold; line-height: 13px; font-size: 10px; }

.explorer { position: absolute; left: 138px; top: 252px; width: 960px; height: 278px; background: #202020; color: #e8e8e8; display: flex; flex-direction: column; box-shadow: 0 3px 9px rgba(0,0,0,.45), 0 0 0 1px rgba(70,70,70,.6); white-space: nowrap; }
.ex-title { height: 28px; flex: none; background: #2b2b2b; display: flex; align-items: center; padding: 0 0 1px 8px; color: #9c9c9c; }
.ef { width: 14px; height: 16px; }
.ex-title i { color: #666; width: 16px; text-align: center; }
.ex-title .chk { margin-right: 7px; }
.qa { width: 8px; height: 8px; margin: 2px 0 0 6px; }
.exctl { width: 110px; height: 20px; margin-left: auto; margin-right: 6px; }
.ribbon { height: 22px; flex: none; background: #000; display: flex; align-items: center; }
.file { width: 52px; height: 22px; background: #a4262c; text-align: center; line-height: 22px; }
.r1 { margin-left: 13px; width: 67px; } .r2 { width: 85px; } .r3 { flex: 1; }
.rdn { width: 10px; height: 6px; }
.help { width: 15px; height: 15px; border-radius: 8px; background: #1976c8; border: 1px solid #8cc4f0; margin: -1px 3px 0 8px; font: bold 11px/13px "Noto Sans", sans-serif; text-align: center; color: #fff; }
.addr { height: 39px; flex: none; background: #191919; display: flex; align-items: center; padding-bottom: 1px; }
.navs { width: 92px; height: 20px; margin-right: 7px; overflow: visible; }
.path { width: 650px; height: 28px; border: 1px solid #555; display: flex; align-items: center; padding-left: 3px; }
.path .rt { margin: 0 8.300px 0 7px; }
.path .ef + .rt { margin: 0 7.500px 0 6px; }
.pend { width: 42px; height: 20px; margin-left: auto; margin-right: 5px; }
.search { width: 190px; height: 28px; border: 1px solid #555; margin-left: 10px; display: flex; align-items: center; gap: 12px; padding-left: 14px; color: #7c7c7c; }
.search svg { width: 12px; height: 12px; }
.ex-main { flex: 1; display: flex; overflow: hidden; }
.navpane { width: 280px; background: #191919; position: relative; padding-top: 16px; border-right: 1px solid #262626; }
.quick { height: 22.4px; display: flex; align-items: center; padding: 0 0 1px 25px; gap: 4px; }
.quick svg { width: 13px; height: 13px; }
.nv { height: 22.4px; display: flex; align-items: center; padding: 0 0 .6px 29px; }
.ni { width: 16px; height: 14px; margin-right: 4.500px; }
.nv .pin { width: 10px; height: 10px; margin-left: auto; margin-right: 19px; }
.nscroll { position: absolute; right: 1px; top: 2px; bottom: 0; width: 14px; display: flex; flex-direction: column; align-items: center; padding: 5px 0 4px; color: #999; }
.nscroll svg { width: 9px; height: 6px; }
.nscroll i { width: 14px; height: 43px; background: #4d4d4d; margin: 3px 0 auto; }
.flist { flex: 1; }
.eh { display: grid; grid-template-columns: 257px 135px 113px 74.500px; height: 23px; color: #c9c9c9; margin-top: 1px; }
.eh > span { border-right: 1px solid #5c5c5c; display: flex; align-items: center; padding: 0 0 1px 5.500px; position: relative; }
.eh > span:first-child { padding-left: 18px; }
.eh svg { position: absolute; left: 130px; top: -1px; width: 9px; height: 6px; color: #888; }
.er { display: grid; grid-template-columns: 240px 135px 113px 70px; height: 19px; background: #333; width: 558px; margin: 6px 0 0 17px; align-items: center; color: #d4d4d4; }
.er > span { padding-left: 6px; display: flex; align-items: center; }
.er > span:first-child { padding-left: 2px; color: #eee; }
.er svg { width: 16px; height: 14px; margin-right: 3px; }
.er .sz { justify-content: flex-end; padding-right: 3px; letter-spacing: -0.4px; }
.ex-status { height: 22px; flex: none; background: #333; display: flex; align-items: center; padding-left: 13px; color: #d8d8d8; letter-spacing: -0.22px; }
.ex-status i { width: 1px; height: 11px; background: #ccc; margin: 0 9.500px 0 9px; }
.viewbtn { width: 25px; height: 22px; background: #252525; margin-left: auto; display: flex; align-items: center; padding-left: 4px; }
.viewic { width: 13px; height: 10px; }

.word { position: absolute; left: 724px; top: 416px; width: 341px; height: 156px; background: #fff; border: 1px solid #2b579a; border-top-color: #3a6db0; display: flex; flex-direction: column; box-shadow: 0 0 9px rgba(10,25,50,.75); }
.w-title { height: 28px; flex: none; display: flex; align-items: center; border-bottom: 1px solid #8d99a8; color: #555; padding-left: 8px; white-space: nowrap; }
.wi { width: 16px; height: 14px; margin-right: 22px; }
.wctl { width: 76px; height: 20px; margin-left: auto; margin-right: 1px; }
.w-doc { flex: 1; background: linear-gradient(#fff, #f0f0f0 25px); padding-right: 15px; }
.page { background: #fff; height: 90px; padding-left: 22px; }
.page p { margin: 0; font: 300 18px/32px "Noto Sans", "Open Sans", sans-serif; color: #1c1c1c; letter-spacing: -0.03px; white-space: nowrap; position: relative; }
.caret { position: absolute; left: 0; top: 5px; width: 1px; height: 24px; background: #000; }
.sq { text-decoration: underline wavy #e03030 1px; text-underline-offset: 1px; text-decoration-skip-ink: none; }
.sq.blue { text-decoration-color: #3030e0; }
.w-status { height: 21px; flex: none; background: #2b579a; display: flex; align-items: center; padding: 0 0 1px 55px; color: #fff; }
.m { width: 36px; height: 21px; display: flex; align-items: center; justify-content: center; }
.m.on { background: #1e4480; }
.m svg { width: 14px; height: 12px; }
.zoom { width: 118px; height: 12px; margin-left: 3px; }
.pct { margin-left: 12px; letter-spacing: -0.4px; }

.caption { position: absolute; left: 153px; top: 554px; font: bold 58px/88px "Noto Sans", "Open Sans", sans-serif; color: #f00; letter-spacing: -0.9px; white-space: nowrap; }
```
